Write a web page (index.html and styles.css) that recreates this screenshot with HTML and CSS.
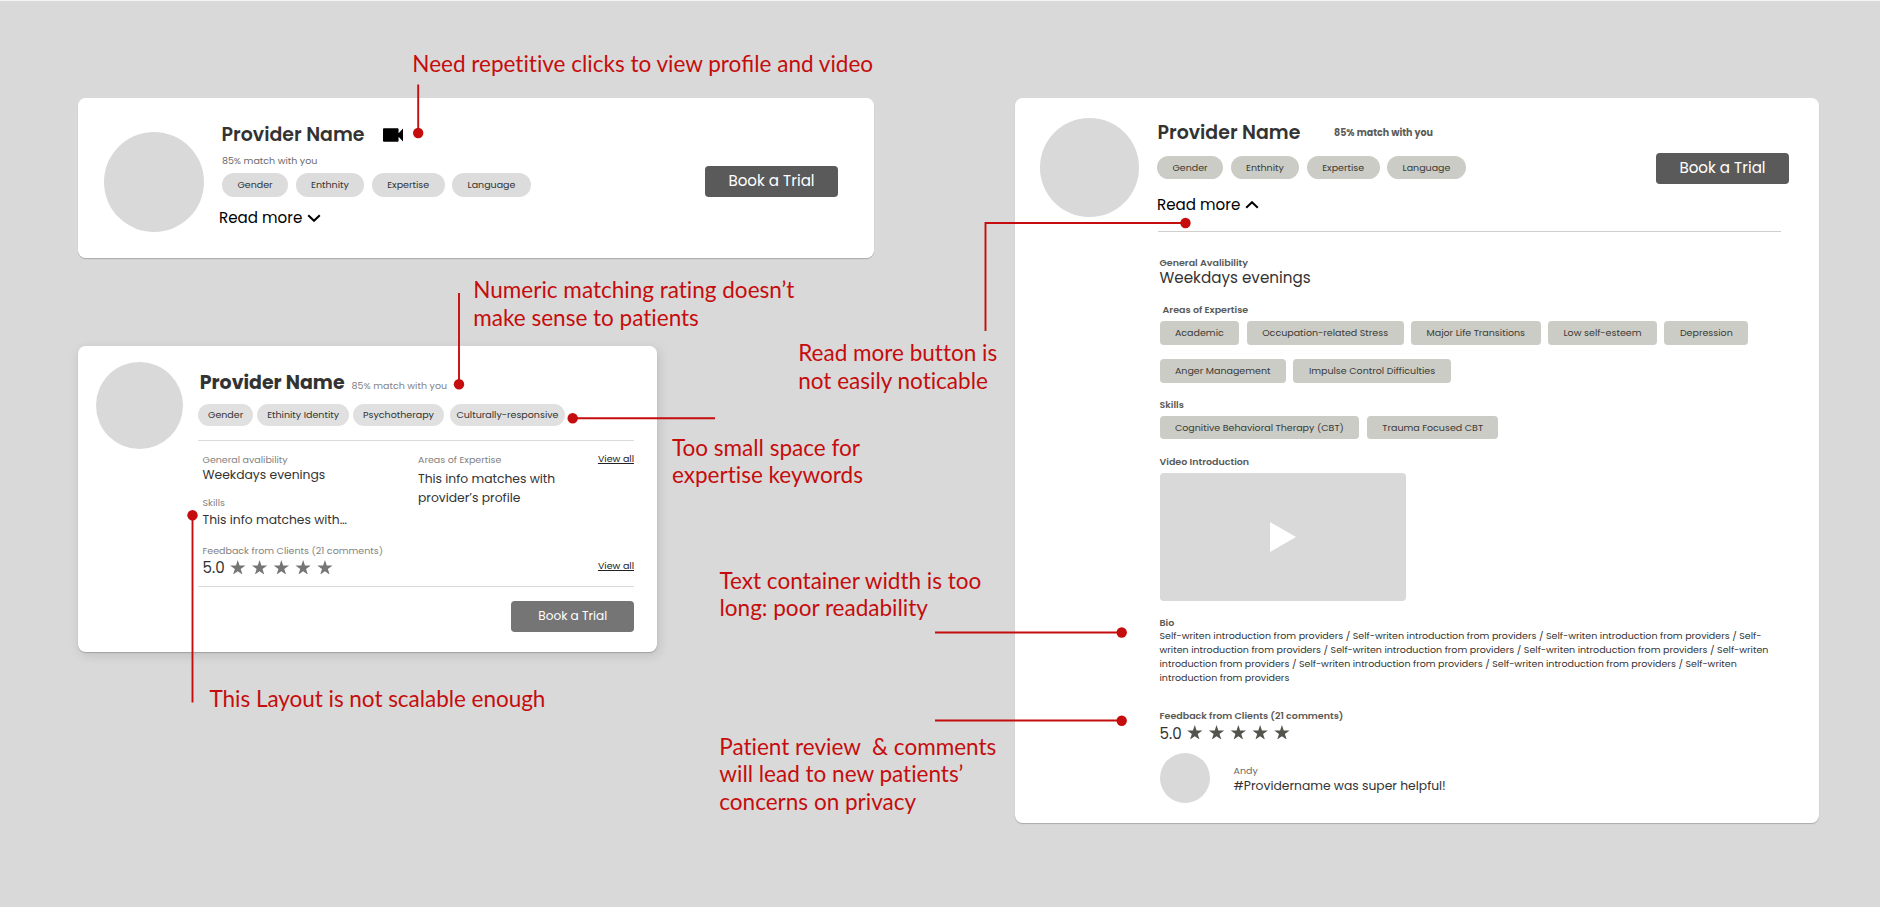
FILE: index.html
```html
<!DOCTYPE html>
<html lang="en">
<head>
<meta charset="utf-8">
<title>Provider card review</title>
<link rel="stylesheet" href="styles.css">
</head>
<body>
<svg class="defs" aria-hidden="true">
  <symbol id="star" viewBox="0.4 0 19.2 18.1"><path d="M10 0l2.25 6.91h7.26l-5.88 4.27 2.25 6.91L10 13.82l-5.88 4.27 2.25-6.91L.49 6.91h7.26z"/></symbol>
  <symbol id="stars" viewBox="0 0 103 14.6">
    <use href="#star" x="0" width="15.5" height="14.6"/><use href="#star" x="21.8" width="15.5" height="14.6"/><use href="#star" x="43.6" width="15.5" height="14.6"/><use href="#star" x="65.4" width="15.5" height="14.6"/><use href="#star" x="87.2" width="15.5" height="14.6"/>
  </symbol>
</svg>
<main class="board">

  <section class="card card-brief">
    <div class="avatar"></div>
    <div class="info">
      <div class="title-row">
        <h2 class="name">Provider Name</h2>
        <svg class="videocam" viewBox="3 6 18 12" preserveAspectRatio="none"><path d="M17 10.500V7c0-.55-.3-.8-.8-.8H3.800c-.5 0-.8.25-.8.8v10c0 .55.3.8.8.8h12.400c.5 0 .8-.25.8-.8v-3.500l4 4v-11l-4 4z"/></svg>
      </div>
      <p class="match">85% match with you</p>
      <div class="chips">
        <span class="chip">Gender</span><span class="chip">Enthnity</span><span class="chip">Expertise</span><span class="chip">Language</span>
      </div>
      <div class="read-more">Read more <svg class="chevron" viewBox="0 0 14 8"><path d="M1.200 1.200 7 6.800l5.800-5.600"/></svg></div>
    </div>
    <button class="book">Book a Trial</button>
  </section>

  <section class="card card-summary">
    <div class="avatar"></div>
    <div class="info">
      <div class="title-row">
        <h2 class="name">Provider Name</h2>
        <span class="match">85% match with you</span>
      </div>
      <div class="chips">
        <span class="chip">Gender</span><span class="chip">Ethinity Identity</span><span class="chip">Psychotherapy</span><span class="chip chip-tight">Culturally-responsive</span>
      </div>
      <div class="details">
        <div class="col-main">
          <p class="label">General avalibility</p>
          <p class="value">Weekdays evenings</p>
          <p class="label label-skills">Skills</p>
          <p class="value value-skills">This info matches with…</p>
        </div>
        <div class="col-areas">
          <p class="label">Areas of Expertise</p>
          <p class="value value-areas">This info matches with<br>provider’s profile</p>
        </div>
        <a class="view-all">View all</a>
      </div>
      <div class="feedback">
        <div>
          <p class="label">Feedback from Clients (21 comments)</p>
          <div class="rating">5.0 <svg class="stars"><use href="#stars"/></svg></div>
        </div>
        <a class="view-all">View all</a>
      </div>
      <button class="book">Book a Trial</button>
    </div>
  </section>

  <section class="card card-full">
    <div class="avatar"></div>
    <div class="info">
      <header class="head">
        <div>
          <div class="title-row">
            <h2 class="name">Provider Name</h2>
            <span class="match">85% match with you</span>
          </div>
          <div class="chips">
            <span class="chip">Gender</span><span class="chip">Enthnity</span><span class="chip">Expertise</span><span class="chip">Language</span>
          </div>
          <div class="read-more">Read more <svg class="chevron" viewBox="0 0 14 8"><path d="M1.200 6.800 7 1.200l5.800 5.600"/></svg></div>
        </div>
        <button class="book">Book a Trial</button>
      </header>
      <div class="body">
        <h3 class="label">General Avalibility</h3>
        <p class="availability">Weekdays evenings</p>
        <h3 class="label label-areas">Areas of Expertise</h3>
        <div class="tags">
          <span class="tag">Academic</span><span class="tag">Occupation-related Stress</span><span class="tag">Major Life Transitions</span><span class="tag">Low self-esteem</span><span class="tag">Depression</span>
          <span class="tag">Anger Management</span><span class="tag">Impulse Control Difficulties</span>
        </div>
        <h3 class="label">Skills</h3>
        <div class="tags">
          <span class="tag">Cognitive Behavioral Therapy (CBT)</span><span class="tag">Trauma Focused CBT</span>
        </div>
        <h3 class="label">Video Introduction</h3>
        <div class="video"><svg class="play" viewBox="0 0 26 30"><path d="M0 0l26 15L0 30z"/></svg></div>
        <h3 class="label">Bio</h3>
        <p class="bio">Self-writen introduction from providers / Self-writen introduction from providers / Self-writen introduction from providers / Self-writen introduction from providers / Self-writen introduction from providers / Self-writen introduction from providers / Self-writen introduction from providers / Self-writen introduction from providers / Self-writen introduction from providers / Self-writen introduction from providers</p>
        <h3 class="label">Feedback from Clients (21 comments)</h3>
        <div class="rating">5.0 <svg class="stars"><use href="#stars"/></svg></div>
        <div class="comment">
          <div class="avatar"></div>
          <div class="comment-text">
            <p class="author">Andy</p>
            <p class="value">#Providername was super helpful!</p>
          </div>
        </div>
      </div>
    </div>
  </section>

  <svg class="connectors" viewBox="0 0 1880 907">
    <g class="lines">
      <path d="M418.200 84.500V133"/>
      <path d="M459 293V384"/>
      <path d="M572.500 418.300H715"/>
      <path d="M192.500 515V702.500"/>
      <path d="M1185.500 223H985.500V331"/>
      <path d="M935 632.500H1121.500"/>
      <path d="M935 720.500H1121.500"/>
    </g>
    <g class="dots">
      <circle cx="418.200" cy="133" r="5.200"/>
      <circle cx="459" cy="384.300" r="5.200"/>
      <circle cx="572.700" cy="418.300" r="5.200"/>
      <circle cx="192.500" cy="515.200" r="5.200"/>
      <circle cx="1185.500" cy="223" r="5.200"/>
      <circle cx="1121.700" cy="632.500" r="5.200"/>
      <circle cx="1121.700" cy="720.700" r="5.200"/>
    </g>
  </svg>

  <p class="note note-clicks">Need repetitive clicks to view pro<span class="lig">fi</span>le and video</p>
  <p class="note note-rating">Numeric matching rating doesn’t<br>make sense to patients</p>
  <p class="note note-readmore">Read more button is<br>not easily noticable</p>
  <p class="note note-keywords">Too small space for<br>expertise keywords</p>
  <p class="note note-width">Text container width is too<br>long: poor readability</p>
  <p class="note note-scalable">This Layout is not scalable enough</p>
  <p class="note note-privacy">Patient review &nbsp;&amp; comments<br>will lead to new patients’<br>concerns on privacy</p>
</main>
</body>
</html>
```
FILE: styles.css
```css
* { box-sizing: border-box; }

body, h2, h3, p { margin: 0; }

body {
  font-family: Poppins, Inter, sans-serif;
  font-size: 9.5px;
  color: #333;
}

.defs { position: absolute; width: 0; height: 0; }

.board {
  position: relative;
  width: 1880px;
  height: 907px;
  overflow: hidden;
  background: #d9d9d9;
  border-top: 1px solid #f4f4f4;
}

/* Cards sit freely on the board; offsets count from below its 1px top edge */
.card {
  position: absolute;
  display: flex;
  align-items: flex-start;
  background: #fff;
  border-radius: 7.5px;
  box-shadow: 0 1px 1px rgba(0, 0, 0, .22);
}

.card-brief { left: 78px; top: 97px; width: 796px; height: 160px; padding: 0 36px 0 26px; }
.card-summary {
  left: 78px; top: 345.300px; width: 579px; height: 305.800px; padding: 0 23px 0 17.600px;
  box-shadow: 0 1px 1px rgba(0, 0, 0, .2), 2px 3px 12px rgba(0, 0, 0, .12);
}
.card-full { left: 1015px; top: 97.300px; width: 804px; height: 724.500px; padding: 0 30px 0 25px; }

/* Shared parts */
.avatar { flex: none; border-radius: 50%; background: #d9d9d9; }
.name { font-size: 18.950px; line-height: 28px; font-weight: 600; white-space: nowrap; }
.match { line-height: 14px; color: #6b6b6b; white-space: nowrap; }
.title-row { display: flex; align-items: center; }

.chips { display: flex; gap: 7.560px; }
.chip {
  padding: 0 15.450px;
  border-radius: 12px;
  background: #dcdcdc;
  line-height: 23.600px;
  white-space: nowrap;
}

.read-more {
  display: flex;
  align-items: center;
  gap: 4.500px;
  font-size: 15.120px;
  line-height: 22px;
  color: #000;
}
.chevron { width: 14px; height: 8px; fill: none; stroke: #000; stroke-width: 2; }

.book {
  flex: none;
  height: 30.500px;
  padding: 0;
  border: 0;
  border-radius: 3.800px;
  background: #5a5a5a;
  color: #fff;
  font: 15.120px/30.500px Poppins, Inter, sans-serif;
  text-align: center;
}

.label { font-size: 9.500px; line-height: 13px; }
.value { font-size: 12.330px; line-height: 18px; }
.rating { display: flex; align-items: center; gap: 5.500px; font-size: 15.120px; line-height: 20px; }
.stars { width: 103px; height: 14.600px; margin-top: -2px; }

/* Brief card */
.card-brief > .avatar { width: 100px; height: 100px; margin-top: 34px; }
.card-brief .info { margin: 23.400px 0 0 17px; }
.card-brief .name { margin-left: .600px; }
.videocam { width: 20px; height: 14px; margin: -1px 0 0 18.800px; }
.card-brief .match { margin: 4.600px 0 5px .900px; }
.card-brief .chips { margin-left: 1px; }
.card-brief .read-more { margin: 10.400px 0 0 -2px; }
.card-brief .book { width: 133px; margin: 68px 0 0 auto; }

/* Summary card */
.card-summary > .avatar { width: 87.500px; height: 87.500px; margin-top: 15.700px; }
.card-summary .info { display: flex; flex-direction: column; width: 436px; margin: 23px 0 0 14.900px; }
.card-summary .title-row { gap: 7px; align-items: baseline; padding-left: 1.700px; }
.card-summary .name { font-weight: 700; }
.card-summary .match, .card-summary .label { color: #828282; }
.card-summary .chips { gap: 4px; margin-top: 6.500px; }
.card-summary .chip { padding: 0 10px; line-height: 22px; background: #e0e0e0; }
.card-summary .chip-tight { margin-left: 2px; padding: 0 6.500px; }
.details {
  display: flex;
  margin-top: 14px;
  padding: 12px 0 0 4.500px;
  border-top: 1px solid #dadada;
}
.col-main { width: 215.500px; }
.col-areas { flex: 1; }
.label-skills { margin-top: 12.300px; }
.value-skills { margin-top: 2.300px; }
.value-areas { margin-top: 4.300px; line-height: 18.900px; }
.view-all { line-height: 12px; color: #222; text-decoration: underline; text-underline-offset: 1px; }
.feedback {
  display: flex;
  align-items: flex-end;
  justify-content: space-between;
  margin-top: 14.600px;
  padding: 0 0 8.500px 4.500px;
  border-bottom: 1px solid #dadada;
}
.feedback .rating { margin-top: .900px; }
.feedback .view-all { margin-bottom: 6px; }
.card-summary .book {
  align-self: flex-end;
  width: 122.500px;
  margin-top: 14px;
  background: #757575;
  font-size: 12.100px;
}

/* Expanded card */
.card-full > .avatar { width: 98.500px; height: 98.500px; margin-top: 20px; }
.card-full > .info { flex: 1; margin: 20.400px 0 0 18.500px; }
.card-full .name { margin-left: .500px; }
.card-full .book { width: 133px; margin-top: 34.600px; }
.card-full .match { margin-left: 33.700px; font-weight: 700; color: #5c5c58; }
.card-full .chips { margin-top: 9px; }
.card-full .chip, .tag { background: #cbccc5; color: #3a3a37; }
.card-full .read-more { margin: 14.300px 0 0 0; }
.head { display: flex; justify-content: space-between; }
.body {
  width: 623.500px;
  margin: 15.300px 0 0 .500px;
  padding: 24.200px 0 0 2px;
  border-top: 1px solid #cfcfcf;
}
.body .label { font-weight: 600; color: #5a5a56; }
.availability { margin: -1.100px 0 15.500px; font-size: 15.180px; line-height: 20px; }
.body .label-areas { padding-left: 3px; }
.tags { display: flex; flex-wrap: wrap; gap: 14px 7.560px; margin: 5px 0 15.200px; }
.tag { padding: 0 15.450px; border-radius: 3.800px; line-height: 23.600px; white-space: nowrap; }
.video {
  display: flex;
  align-items: center;
  justify-content: center;
  width: 246.500px;
  height: 128.500px;
  margin: 5.200px 0 14.500px;
  border-radius: 3.800px;
  background: #d9d9d9;
}
.play { width: 26px; height: 30px; fill: #fff; }
.bio { width: 619px; margin-bottom: 23.400px; line-height: 14.200px; }
.body .rating { margin-top: 1.500px; }
.body .stars { fill: #53544c; }
.feedback .stars { fill: #757575; }
.comment { display: flex; margin-top: 9.300px; }
.comment .avatar { width: 50.500px; height: 50.500px; }
.comment-text { margin: 11.200px 0 0 23.500px; }
.author { line-height: 13px; color: #6b6b67; }

/* Review notes and their pointers, laid over the cards */
.connectors { position: absolute; left: 0; top: -1px; width: 1880px; height: 907px; }
.lines { fill: none; stroke: #c50d0d; stroke-width: 1.900; }
.dots { fill: #c50d0d; }

.note {
  position: absolute;
  font: 22.530px/27.600px Lato, sans-serif;
  font-variant-ligatures: none;
  color: #c50d0d;
  white-space: nowrap;
}
.lig { font-variant-ligatures: normal; }
.note-clicks { left: 412.300px; top: 49px; }
.note-rating { left: 473.300px; top: 275.200px; }
.note-readmore { left: 798.200px; top: 338px; }
.note-keywords { left: 672px; top: 432.500px; }
.note-width { left: 719.500px; top: 565.500px; }
.note-scalable { left: 209.500px; top: 684.200px; letter-spacing: -.040px; }
.note-privacy { left: 719.300px; top: 731.500px; }
```
